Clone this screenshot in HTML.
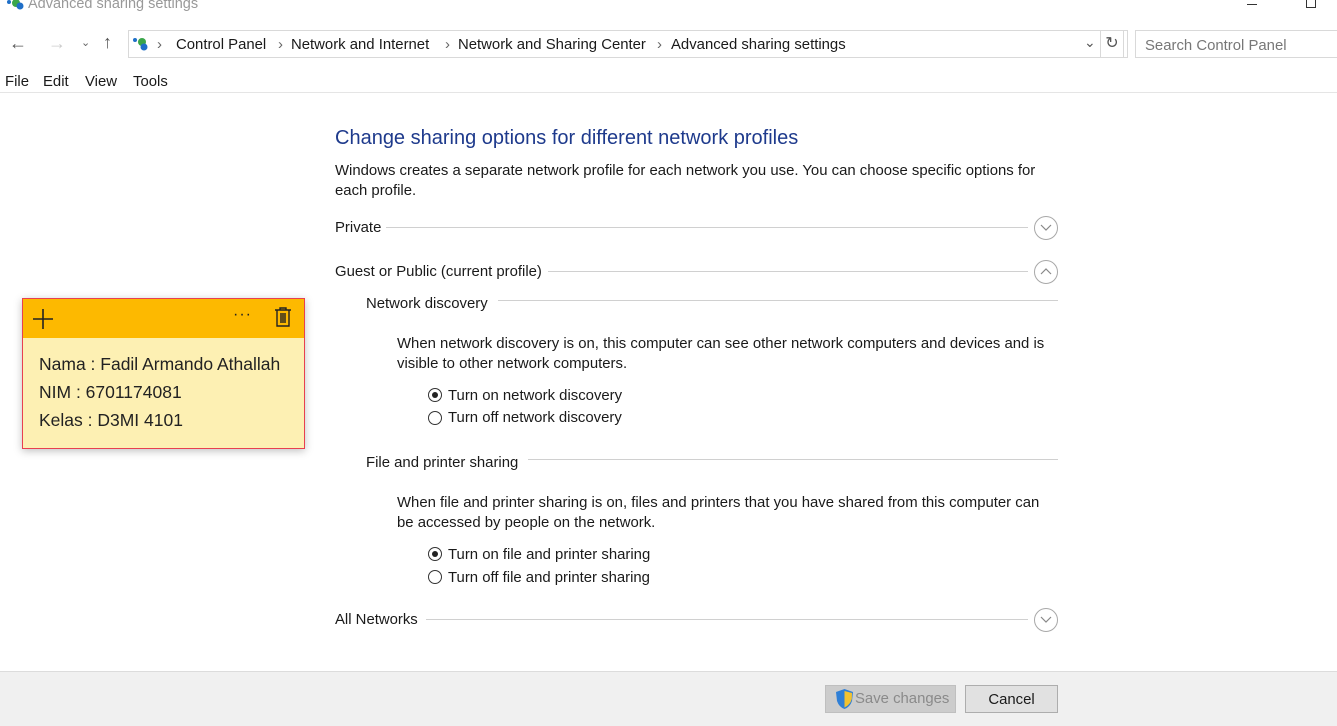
<!DOCTYPE html>
<html><head><meta charset="utf-8"><style>
*{margin:0;padding:0;box-sizing:border-box}
body{width:1337px;height:726px;overflow:hidden;background:#fff;font-family:"Liberation Sans",sans-serif;font-size:14.9px;color:#1a1a1a;position:relative}
.a{position:absolute;white-space:nowrap}
.t{margin-top:2px}
.ln{position:absolute;height:1px;background:#d0d0d0}
.circ{position:absolute;width:24px;height:24px;border:1px solid #a8a8a8;border-radius:50%}
.circ svg{position:absolute;left:5px;top:6px}
.rb{position:absolute;width:14px;height:14px;border:1px solid #333;border-radius:50%;background:#fff}
.rb.on::after{content:"";position:absolute;left:3px;top:3px;width:6px;height:6px;border-radius:50%;background:#222}
</style></head><body>
<svg class="a" style="left:6px;top:0" width="18" height="10"><circle cx="3" cy="2" r="2" fill="#1f6fc8"/><circle cx="10" cy="3" r="4" fill="#3aa64a"/><circle cx="14" cy="6" r="3.5" fill="#1f6fc8"/></svg>
<div class="a" style="left:28px;top:-4px;font-size:14.5px;color:#999">Advanced sharing settings</div>
<div class="a" style="left:1247px;top:4px;width:10px;height:1px;background:#333"></div>
<div class="a" style="left:1306px;top:-2px;width:10px;height:10px;border:1px solid #333"></div>
<div class="a" style="left:9px;top:33px;font-size:18px;color:#555">←</div>
<div class="a" style="left:48px;top:33px;font-size:18px;color:#ccc">→</div>
<div class="a" style="left:81px;top:36px;font-size:11px;color:#666">⌄</div>
<div class="a" style="left:103px;top:32px;font-size:18px;color:#555">↑</div>
<div class="a" style="left:128px;top:30px;width:1000px;height:28px;border:1px solid #d9d9d9"></div>
<svg class="a" style="left:132px;top:36px" width="18" height="16"><circle cx="3" cy="4" r="2" fill="#1f6fc8"/><circle cx="10" cy="6" r="4" fill="#3aa64a"/><circle cx="12" cy="11" r="3.5" fill="#1f6fc8"/></svg>
<div class="a t" style="left:157px;top:35px;color:#666">›</div><div class="a t" style="left:176px;top:35px">Control Panel</div>
<div class="a t" style="left:278px;top:35px;color:#666">›</div><div class="a t" style="left:291px;top:35px">Network and Internet</div>
<div class="a t" style="left:445px;top:35px;color:#666">›</div><div class="a t" style="left:458px;top:35px">Network and Sharing Center</div>
<div class="a t" style="left:657px;top:35px;color:#666">›</div><div class="a t" style="left:671px;top:35px">Advanced sharing settings</div>
<div class="a" style="left:1084px;top:34px;font-size:14px;color:#555">⌄</div>
<div class="a" style="left:1100px;top:30px;width:24px;height:28px;border:1px solid #d9d9d9;text-align:center;line-height:26px;color:#555;font-size:16px">↻</div>
<div class="a" style="left:1135px;top:30px;width:210px;height:28px;border:1px solid #d9d9d9;padding:7px 9px;color:#777">Search Control Panel</div>
<div class="a t" style="left:5px;top:72px">File</div>
<div class="a t" style="left:43px;top:72px">Edit</div>
<div class="a t" style="left:85px;top:72px">View</div>
<div class="a t" style="left:133px;top:72px">Tools</div>
<div class="ln" style="left:0;top:92px;width:1337px;background:#e5e5e5"></div>
<div class="a t" style="left:335px;top:125px;font-size:20px;color:#1e3a8c">Change sharing options for different network profiles</div>
<div class="a t" style="left:335px;top:159px;line-height:20px">Windows creates a separate network profile for each network you use. You can choose specific options for<br>each profile.</div>
<div class="a t" style="left:335px;top:218px">Private</div>
<div class="ln" style="left:386px;top:227px;width:642px"></div>
<div class="circ" style="left:1034px;top:216px"><svg width="12" height="10"><path d="M1 2 L6 7 L11 2" fill="none" stroke="#888" stroke-width="1.2"/></svg></div>
<div class="a t" style="left:335px;top:262px">Guest or Public (current profile)</div>
<div class="ln" style="left:548px;top:271px;width:480px"></div>
<div class="circ" style="left:1034px;top:260px"><svg width="12" height="10"><path d="M1 7 L6 2 L11 7" fill="none" stroke="#888" stroke-width="1.2"/></svg></div>
<div class="a t" style="left:366px;top:294px">Network discovery</div>
<div class="ln" style="left:498px;top:300px;width:560px"></div>
<div class="a t" style="left:397px;top:332px;line-height:20px">When network discovery is on, this computer can see other network computers and devices and is<br>visible to other network computers.</div>
<div class="rb on" style="left:428px;top:388px"></div><div class="a t" style="left:448px;top:386px">Turn on network discovery</div>
<div class="rb" style="left:428px;top:411px"></div><div class="a t" style="left:448px;top:408px">Turn off network discovery</div>
<div class="a t" style="left:366px;top:453px">File and printer sharing</div>
<div class="ln" style="left:528px;top:459px;width:530px"></div>
<div class="a t" style="left:397px;top:491px;line-height:20px">When file and printer sharing is on, files and printers that you have shared from this computer can<br>be accessed by people on the network.</div>
<div class="rb on" style="left:428px;top:547px"></div><div class="a t" style="left:448px;top:545px">Turn on file and printer sharing</div>
<div class="rb" style="left:428px;top:570px"></div><div class="a t" style="left:448px;top:568px">Turn off file and printer sharing</div>
<div class="a t" style="left:335px;top:610px">All Networks</div>
<div class="ln" style="left:426px;top:619px;width:602px"></div>
<div class="circ" style="left:1034px;top:608px"><svg width="12" height="10"><path d="M1 2 L6 7 L11 2" fill="none" stroke="#888" stroke-width="1.2"/></svg></div>
<div class="a" style="left:0;top:671px;width:1337px;height:55px;background:#f0f0f0;border-top:1px solid #dcdcdc"></div>
<div class="a" style="left:825px;top:685px;width:131px;height:28px;background:#cccccc;border:1px solid #bfbfbf"></div>
<svg class="a" style="left:835px;top:688px" width="19" height="22"><path d="M9.5 1 L18 4 L17 13 Q15 19 9.5 21 Q4 19 2 13 L1 4 Z" fill="#2f7fd6"/><path d="M9.5 11 L16.8 11 Q15 17 9.5 19.5 Z" fill="#f2c230"/><path d="M9.5 11 L9.5 3 L17 5 L16.8 11Z" fill="#f2c230"/></svg>
<div class="a" style="left:855px;top:691px;color:#8a8a8a">Save changes</div>
<div class="a" style="left:965px;top:685px;width:93px;height:28px;background:#e1e1e1;border:1px solid #adadad;text-align:center;line-height:26px;padding-top:1px">Cancel</div>
<div class="a" style="left:22px;top:298px;width:283px;height:151px;background:#fdf0b3;border:1px solid #e8404f;box-shadow:0 2px 8px rgba(0,0,0,.25)"></div>
<div class="a" style="left:23px;top:299px;width:281px;height:39px;background:#fdb900"></div>
<svg class="a" style="left:32px;top:308px" width="22" height="22"><path d="M11 1V21M1 11H21" stroke="#222" stroke-width="1.6"/></svg>
<div class="a" style="left:233px;top:306px;font-size:16px;color:#222;letter-spacing:1px">···</div>
<svg class="a" style="left:274px;top:307px" width="18" height="20"><path d="M1 3H17M6 3V1H12V3M3 3V19H15V3M7 6V16M9 6V16M11 6V16" fill="none" stroke="#222" stroke-width="1.4"/></svg>
<div class="a" style="left:39px;top:350px;font-size:17.5px;line-height:28px;color:#222">Nama : Fadil Armando Athallah<br>NIM : 6701174081<br>Kelas : D3MI 4101</div>
</body></html>
